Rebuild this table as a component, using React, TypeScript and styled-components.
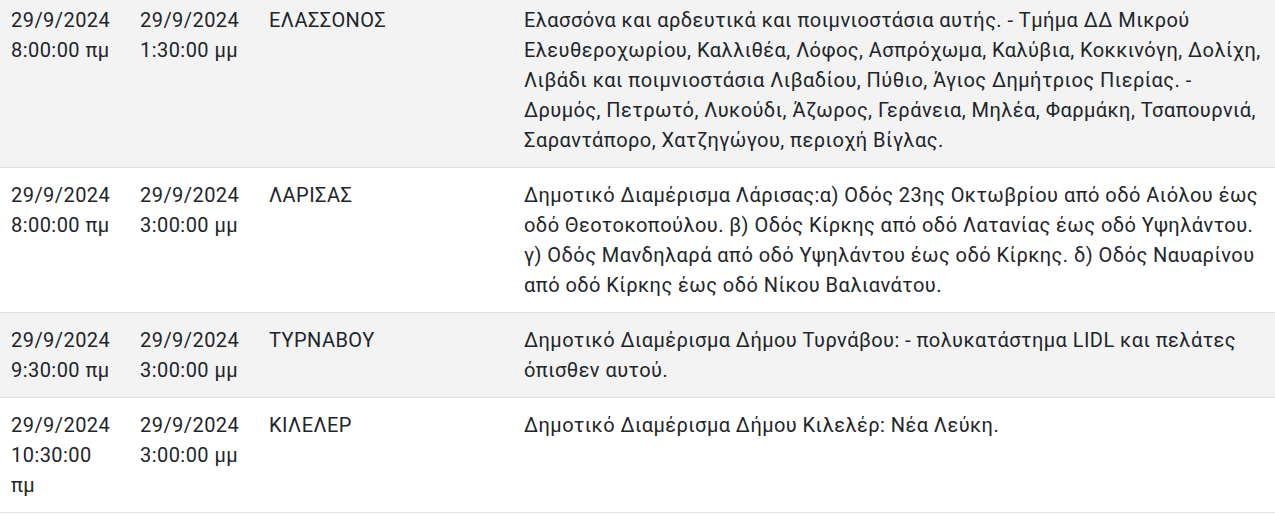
import styled, { createGlobalStyle } from "styled-components";

const GlobalStyle = createGlobalStyle`
  html, body {
    margin: 0;
    padding: 0;
    background: #ffffff;
    overflow: hidden;
  }
  body {
    font-family: Roboto, "Noto Sans", "Liberation Sans", sans-serif;
    color: #212529;
  }
`;

const Wrapper = styled.div`
  margin-top: -7px;
  margin-left: -1px;
  width: 1280px;
`;

const Table = styled.table`
  width: 100%;
  border-collapse: collapse;
  table-layout: fixed;
  font-size: 20px;
  line-height: 30px;
  letter-spacing: 0.45px;
`;

const Col = styled.col<{ $w?: number }>`
  width: ${({ $w }) => ($w ? `${$w}px` : "auto")};
`;

const Row = styled.tr<{ $striped: boolean }>`
  background: ${({ $striped }) => ($striped ? "#f3f3f3" : "#ffffff")};
  border-bottom: 1px solid #dee2e6;
`;

const Cell = styled.td`
  padding: 12px;
  vertical-align: top;
  font-weight: 400;
  color: #212529;
`;

interface Outage {
  from: string;
  fromTime: string;
  to: string;
  toTime: string;
  area: string;
  description: string;
}

const outages: Outage[] = [
  {
    from: "29/9/2024",
    fromTime: "8:00:00 πμ",
    to: "29/9/2024",
    toTime: "1:30:00 μμ",
    area: "ΕΛΑΣΣΟΝΟΣ",
    description:
      "Ελασσόνα και αρδευτικά και ποιμνιοστάσια αυτής. - Τμήμα ΔΔ Μικρού Ελευθεροχωρίου, Καλλιθέα, Λόφος, Ασπρόχωμα, Καλύβια, Κοκκινόγη, Δολίχη, Λιβάδι και ποιμνιοστάσια Λιβαδίου, Πύθιο, Άγιος Δημήτριος Πιερίας. - Δρυμός, Πετρωτό, Λυκούδι, Άζωρος, Γεράνεια, Μηλέα, Φαρμάκη, Τσαπουρνιά, Σαραντάπορο, Χατζηγώγου, περιοχή Βίγλας.",
  },
  {
    from: "29/9/2024",
    fromTime: "8:00:00 πμ",
    to: "29/9/2024",
    toTime: "3:00:00 μμ",
    area: "ΛΑΡΙΣΑΣ",
    description:
      "Δημοτικό Διαμέρισμα Λάρισας:α) Οδός 23ης Οκτωβρίου από οδό Αιόλου έως οδό Θεοτοκοπούλου. β) Οδός Κίρκης από οδό Λατανίας έως οδό Υψηλάντου. γ) Οδός Μανδηλαρά από οδό Υψηλάντου έως οδό Κίρκης. δ) Οδός Ναυαρίνου από οδό Κίρκης έως οδό Νίκου Βαλιανάτου.",
  },
  {
    from: "29/9/2024",
    fromTime: "9:30:00 πμ",
    to: "29/9/2024",
    toTime: "3:00:00 μμ",
    area: "ΤΥΡΝΑΒΟΥ",
    description:
      "Δημοτικό Διαμέρισμα Δήμου Τυρνάβου: - πολυκατάστημα LIDL και πελάτες όπισθεν αυτού.",
  },
  {
    from: "29/9/2024",
    fromTime: "10:30:00 πμ",
    to: "29/9/2024",
    toTime: "3:00:00 μμ",
    area: "ΚΙΛΕΛΕΡ",
    description: "Δημοτικό Διαμέρισμα Δήμου Κιλελέρ: Νέα Λεύκη.",
  },
];

const App = () => {
  return (
    <>
      <GlobalStyle />
      <Wrapper>
        <Table>
          <colgroup>
            <Col $w={129} />
            <Col $w={129} />
            <Col $w={255} />
            <Col />
          </colgroup>
          <tbody>
            {outages.map((o, i) => (
              <Row key={i} $striped={i % 2 === 0}>
                <Cell>
                  {o.from} {o.fromTime}
                </Cell>
                <Cell>
                  {o.to} {o.toTime}
                </Cell>
                <Cell>{o.area}</Cell>
                <Cell>{o.description}</Cell>
              </Row>
            ))}
          </tbody>
        </Table>
      </Wrapper>
    </>
  );
};

export default App;
